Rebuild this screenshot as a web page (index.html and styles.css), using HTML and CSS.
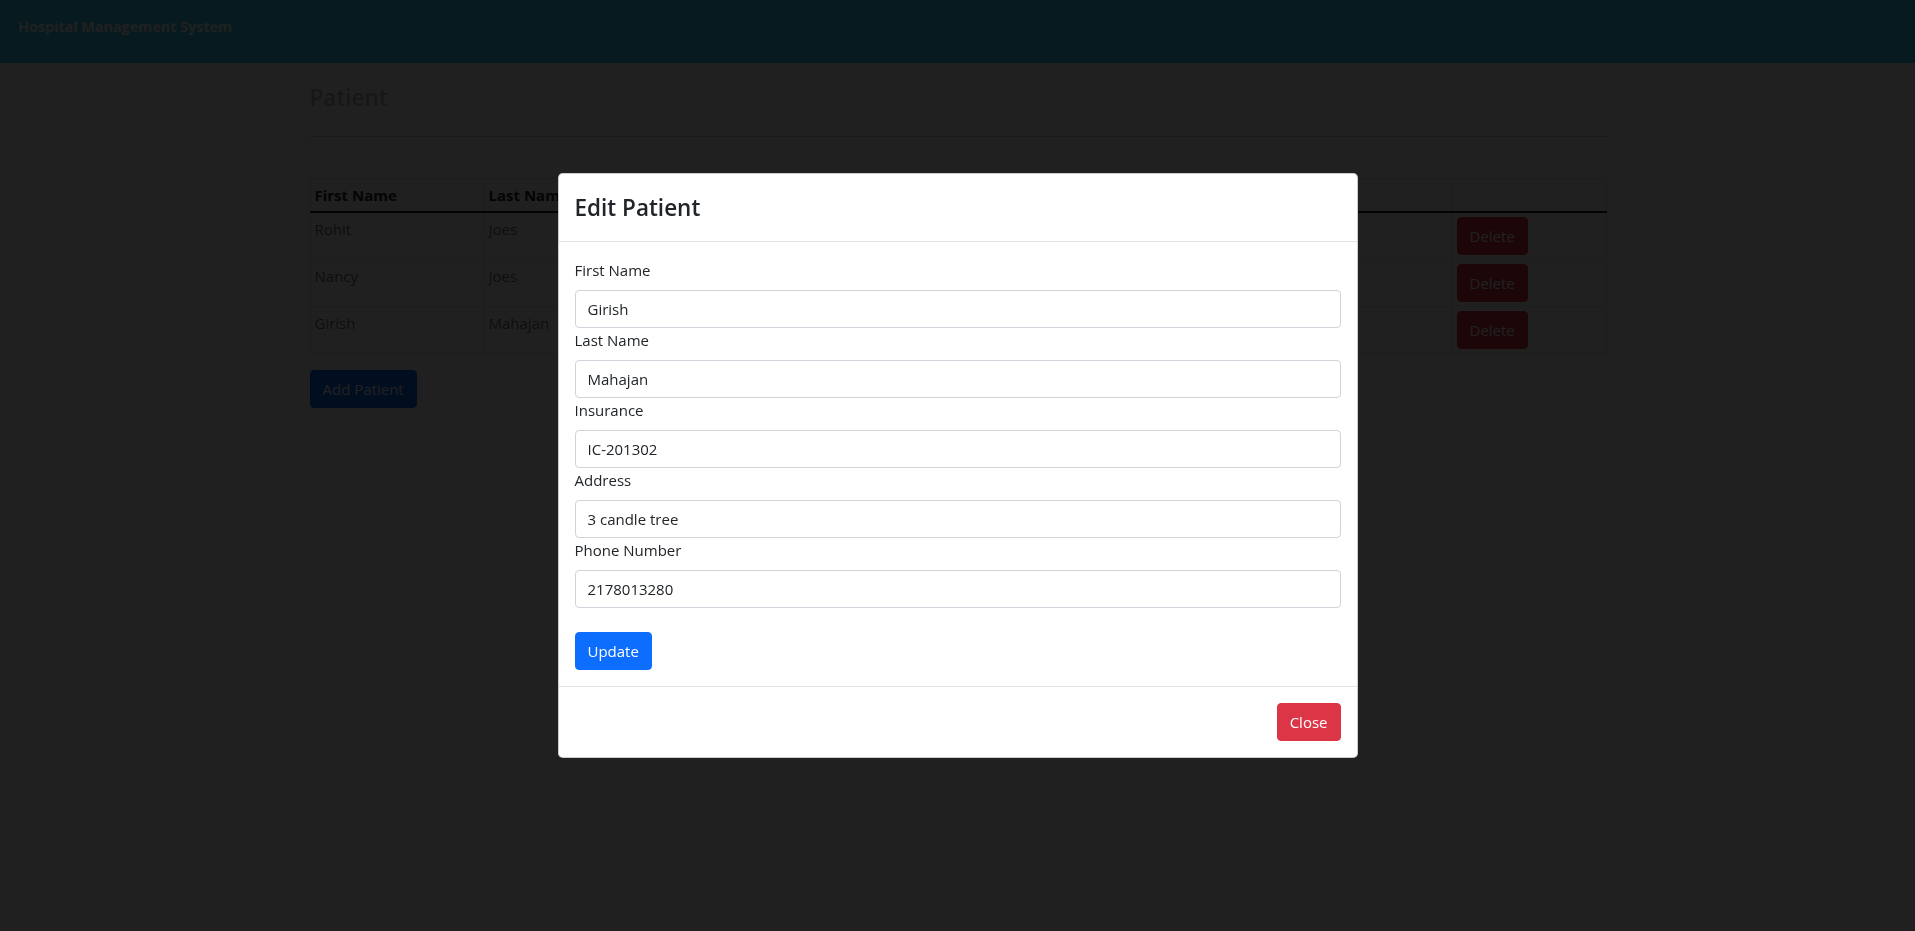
FILE: index.html
```html
<!DOCTYPE html>
<html lang="en">
<head>
<meta charset="utf-8">
<title>Hospital Management System</title>
<link rel="stylesheet" href="styles.css">
</head>
<body>
<nav class="navbar">
  <span class="brand">Hospital Management System</span>
</nav>
<main class="container">
  <h2 class="page-title">Patient</h2>
  <hr class="rule">
  <table class="table">
    <thead>
      <tr>
        <th class="c-first">First Name</th>
        <th class="c-last">Last Name</th>
        <th class="c-ins">Insurance</th>
        <th class="c-addr">Address</th>
        <th class="c-phone">Phone Number</th>
        <th class="c-edit"></th>
        <th class="c-del"></th>
      </tr>
    </thead>
    <tbody>
      <tr>
        <td>Rohit</td><td>Joes</td><td>IC-201300</td><td>12 park street</td><td>2178013278</td>
        <td><button class="btn btn-primary">Edit</button></td>
        <td><button class="btn btn-danger">Delete</button></td>
      </tr>
      <tr>
        <td>Nancy</td><td>Joes</td><td>IC-201301</td><td>12 park street</td><td>2178013279</td>
        <td><button class="btn btn-primary">Edit</button></td>
        <td><button class="btn btn-danger">Delete</button></td>
      </tr>
      <tr>
        <td>Girish</td><td>Mahajan</td><td>IC-201302</td><td>3 candle tree</td><td>2178013280</td>
        <td><button class="btn btn-primary">Edit</button></td>
        <td><button class="btn btn-danger">Delete</button></td>
      </tr>
    </tbody>
  </table>
  <button class="btn btn-primary">Add Patient</button>
</main>

<div class="backdrop"></div>
<div class="modal">
  <div class="modal-content">
    <div class="modal-header">
      <h4 class="modal-title">Edit Patient</h4>
    </div>
    <form class="modal-body">
      <label class="form-label" for="f1">First Name</label>
      <input class="form-control" id="f1" type="text" value="Girish">
      <label class="form-label" for="f2">Last Name</label>
      <input class="form-control" id="f2" type="text" value="Mahajan">
      <label class="form-label" for="f3">Insurance</label>
      <input class="form-control" id="f3" type="text" value="IC-201302">
      <label class="form-label" for="f4">Address</label>
      <input class="form-control" id="f4" type="text" value="3 candle tree">
      <label class="form-label" for="f5">Phone Number</label>
      <input class="form-control" id="f5" type="text" value="2178013280">
      <div class="form-actions">
        <button type="button" class="btn btn-primary">Update</button>
      </div>
    </form>
    <div class="modal-footer">
      <button type="button" class="btn btn-danger">Close</button>
    </div>
  </div>
</div>
</body>
</html>
```

FILE: styles.css
```css
* { box-sizing: border-box; }

html, body { height: 100%; }

body {
  margin: 0;
  background: #ffffff;
  color: #212529;
  font-family: "Open Sans", "Noto Sans", "Liberation Sans", sans-serif;
  font-size: 15px;
  line-height: 24px;
}

/* navbar */
.navbar {
  height: 63px;
  background: #2fcff5;
  padding: 15px 18px 0;
}
.brand {
  display: block;
  color: #ffffff;
  font-weight: 700;
  font-size: 14.5px;
  line-height: 24px;
  letter-spacing: -0.1px;
}

/* page */
.container {
  width: 1320px;
  margin: 0 auto;
  padding: 0 12px;
}
.page-title {
  margin: 20px 0 0;
  font-size: 22.5px;
  line-height: 29px;
  font-weight: 600;
  color: #b8b8b8;
}
.rule {
  margin: 24px 0 41px;
  border: 0;
  border-top: 1px solid #c8c9ca;
  height: 0;
}

.table {
  width: 100%;
  table-layout: fixed;
  border-collapse: collapse;
  margin-bottom: 16px;
  vertical-align: top;
  border: 1px solid #dee2e6;
}
.table th,
.table td {
  border: 1px solid #dee2e6;
  padding: 4px;
  text-align: left;
  vertical-align: top;
}
.table th {
  font-weight: 700;
  color: #212529;
  border-bottom: 2px solid #212529;
}
.table td { color: #707070; }

.c-first { width: 174px; }
.c-last { width: 172px; }
.c-ins { width: 180px; }
.c-addr { width: 240px; }
.c-phone { width: 200px; }
.c-edit { width: 176px; }
.c-del { width: 154px; }

/* buttons */
.btn {
  display: inline-block;
  height: 38px;
  padding: 6px 12px;
  font-family: inherit;
  font-size: 15px;
  line-height: 24px;
  border: 1px solid transparent;
  border-radius: 4px;
  color: #ffffff;
  cursor: pointer;
}
.btn-primary { background: #0d6efd; border-color: #0d6efd; }
.btn-danger { background: #dc3545; border-color: #dc3545; }

/* modal */
.backdrop {
  position: fixed;
  inset: 0;
  background: rgba(0, 0, 0, 0.875);
}
.modal {
  position: fixed;
  inset: 0;
  display: flex;
  align-items: center;
  justify-content: center;
}
.modal-content {
  width: 800px;
  background: #ffffff;
  border: 1px solid rgba(0, 0, 0, 0.2);
  border-radius: 4.8px;
  display: flex;
  flex-direction: column;
}
.modal-header {
  padding: 16px;
  border-bottom: 1px solid #dee2e6;
}
.modal-title {
  margin: 0;
  font-size: 22.5px;
  line-height: 35px;
  font-weight: 600;
  color: #212529;
}
.modal-body {
  margin: 0;
  padding: 16px;
  display: flex;
  flex-direction: column;
}
.form-label {
  display: block;
  margin-bottom: 8px;
  color: #212529;
}
.form-control {
  display: block;
  width: 100%;
  height: 38px;
  padding: 6px 12px;
  font-family: inherit;
  font-size: 15px;
  line-height: 24px;
  color: #212529;
  background: #ffffff;
  border: 1px solid #ced4da;
  border-radius: 4px;
}
.form-actions {
  margin-top: 24px;
}
.modal-footer {
  display: flex;
  justify-content: flex-end;
  padding: 12px;
  border-top: 1px solid #dee2e6;
}
.modal-footer .btn { margin: 4px; }
```
